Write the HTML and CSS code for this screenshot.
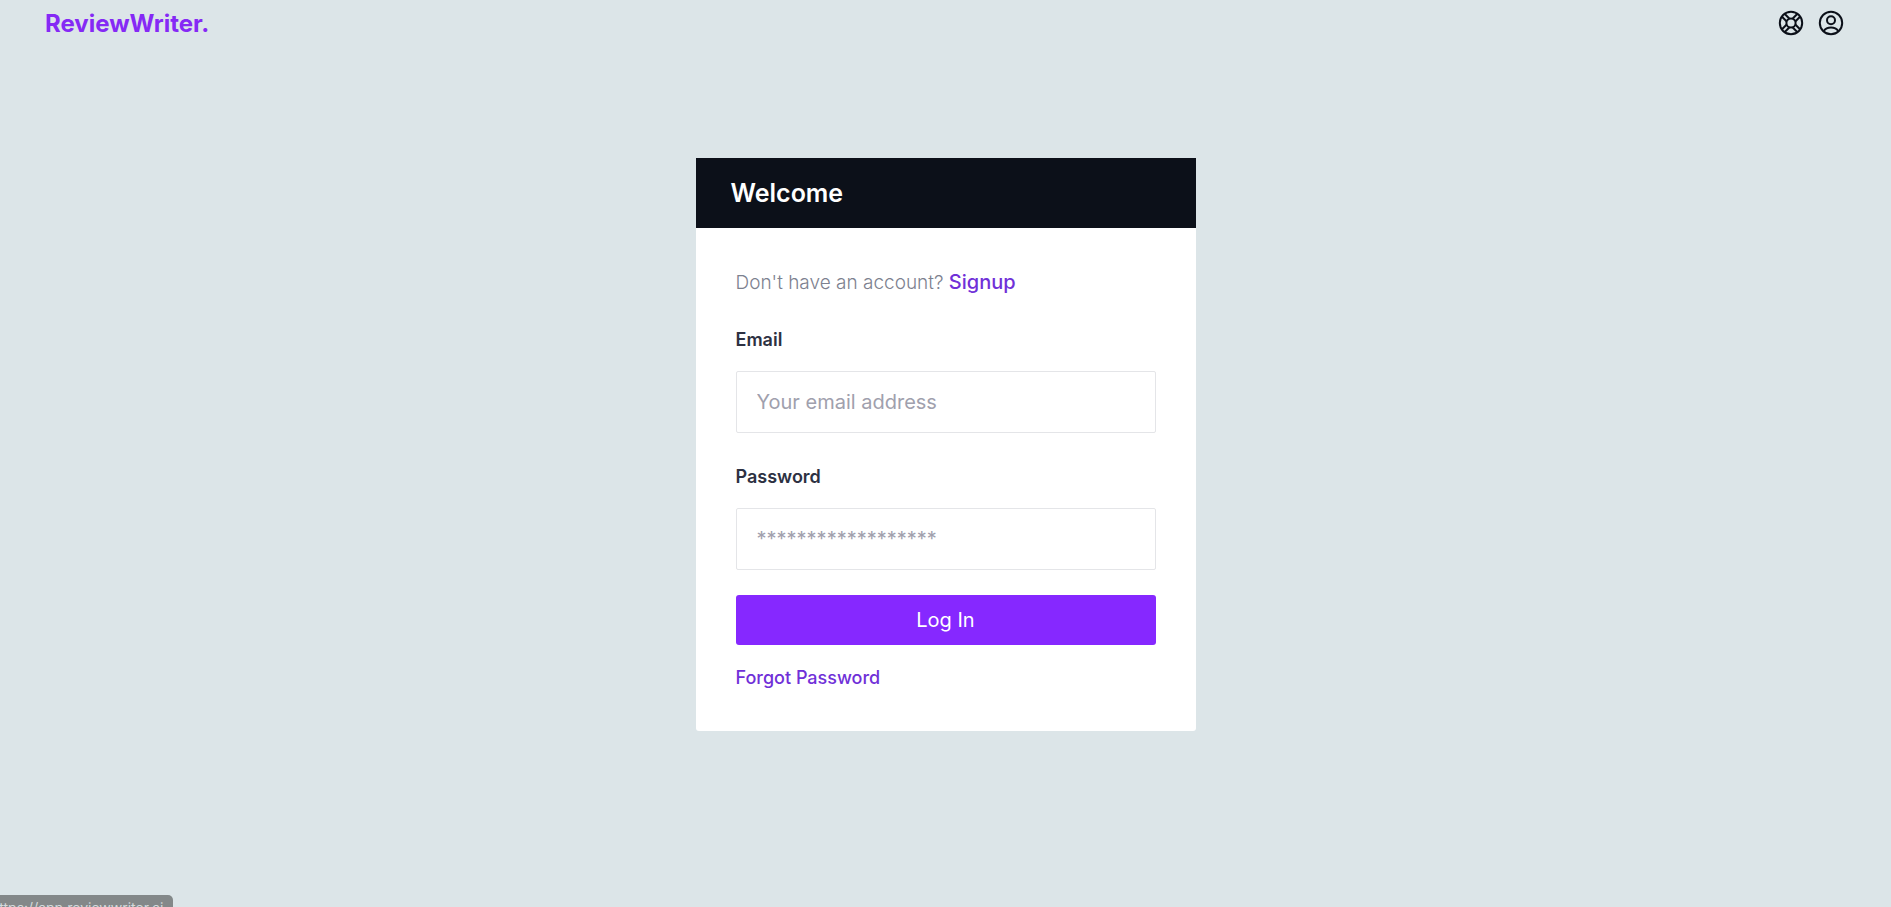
FILE: index.html
```html
<!DOCTYPE html>
<html lang="en">
<head>
<meta charset="utf-8">
<title>ReviewWriter</title>
<link rel="stylesheet" href="styles.css">
</head>
<body>
<header class="topbar">
  <a class="brand" href="#">ReviewWriter.</a>
  <nav class="actions" aria-label="Account">
    <button class="icon-button" type="button" aria-label="Help">
      <svg viewBox="0 0 26 26" width="26" height="26" fill="none" stroke="currentColor" stroke-width="2">
        <circle cx="13" cy="13" r="11.2"/>
        <circle cx="13" cy="13" r="4.6"/>
        <path d="M17.3 14.500l4.700 4.700M14.500 17.300l4.700 4.700M11.500 17.300l-4.700 4.700M8.700 14.500l-4.700 4.700M8.700 11.500L4 6.800M11.500 8.700L6.800 4M14.500 8.700L19.200 4M17.300 11.500L22 6.800"/>
      </svg>
    </button>
    <button class="icon-button" type="button" aria-label="Profile">
      <svg viewBox="0 0 26 26" width="26" height="26" fill="none" stroke="currentColor" stroke-width="2">
        <circle cx="13" cy="13" r="11.2"/>
        <circle cx="13" cy="10.2" r="4"/>
        <path d="M5.600 21.200c1.600-2.300 4.200-3.600 7.400-3.600s5.800 1.300 7.400 3.600"/>
      </svg>
    </button>
  </nav>
</header>
<main class="page">
  <section class="card">
    <h1 class="card-title">Welcome</h1>
    <form class="form">
      <p class="hint">Don't have an account? <a class="signup" href="#">Signup</a></p>
      <label class="label" for="email">Email</label>
      <input class="field" id="email" type="email" placeholder="Your email address">
      <label class="label" for="password">Password</label>
      <input class="field" id="password" type="password" placeholder="******************">
      <button class="submit" type="submit">Log In</button>
      <a class="forgot" href="#">Forgot Password</a>
    </form>
  </section>
</main>
<div class="status">https://app.reviewwriter.ai</div>
</body>
</html>
```
FILE: styles.css
```css
* {
  box-sizing: border-box;
}

body {
  margin: 0;
  min-height: 100vh;
  background: #dce5e8;
  font-family: Inter, "Liberation Sans", sans-serif;
  overflow: hidden;
}

a {
  text-decoration: none;
}

.topbar {
  display: flex;
  align-items: center;
  justify-content: space-between;
  height: 46px;
  padding: 0 47px 0 45px;
}

.brand {
  color: #8529f5;
  font-size: 24px;
  font-weight: 700;
}

.actions {
  display: flex;
  gap: 14px;
}

.icon-button {
  display: flex;
  padding: 0;
  border: 0;
  background: none;
  color: #0c1019;
}

.page {
  display: flex;
  justify-content: center;
  padding: 112px 16px 0;
}

.card {
  width: 100%;
  max-width: 500px;
  background: #fff;
  border-radius: 3px;
}

.card-title {
  margin: 0;
  padding: 0 35px;
  background: #0c1019;
  color: #fff;
  font-size: 25px;
  font-weight: 600;
  line-height: 70px;
}

.form {
  display: flex;
  flex-direction: column;
  padding: 39px 40px 40px;
}

.hint {
  margin: 0 0 28px;
  color: #7d818f;
  font-size: 19px;
  font-weight: 300;
  line-height: 30px;
}

.signup {
  color: #7030d8;
  font-size: 20px;
  font-weight: 500;
}

.label {
  margin-bottom: 18px;
  color: #2d3142;
  font-size: 18px;
  font-weight: 600;
  line-height: 27px;
}

.field {
  width: 100%;
  height: 62px;
  margin-bottom: 30px;
  padding: 0 20px;
  border: 1px solid #e4e5e8;
  border-radius: 2px;
  background: #fff;
  color: #2d3142;
  font: 400 20px Inter, "Liberation Sans", sans-serif;
}

.field::placeholder {
  color: #a0a0ad;
}

.field:last-of-type {
  margin-bottom: 25px;
}

.submit {
  height: 50px;
  margin-bottom: 20px;
  border: 0;
  border-radius: 3px;
  background: #8628ff;
  color: #fff;
  font: 400 20px Inter, "Liberation Sans", sans-serif;
}

.forgot {
  align-self: flex-start;
  color: #7030d8;
  font-size: 18px;
  font-weight: 500;
  line-height: 26px;
}

.status {
  position: fixed;
  bottom: -11px;
  left: -9px;
  padding: 5px 10px 3px 0;
  border-radius: 0 5px 0 0;
  background: #838889;
  color: #d3dadc;
  font-size: 14px;
  line-height: 15px;
}
```
